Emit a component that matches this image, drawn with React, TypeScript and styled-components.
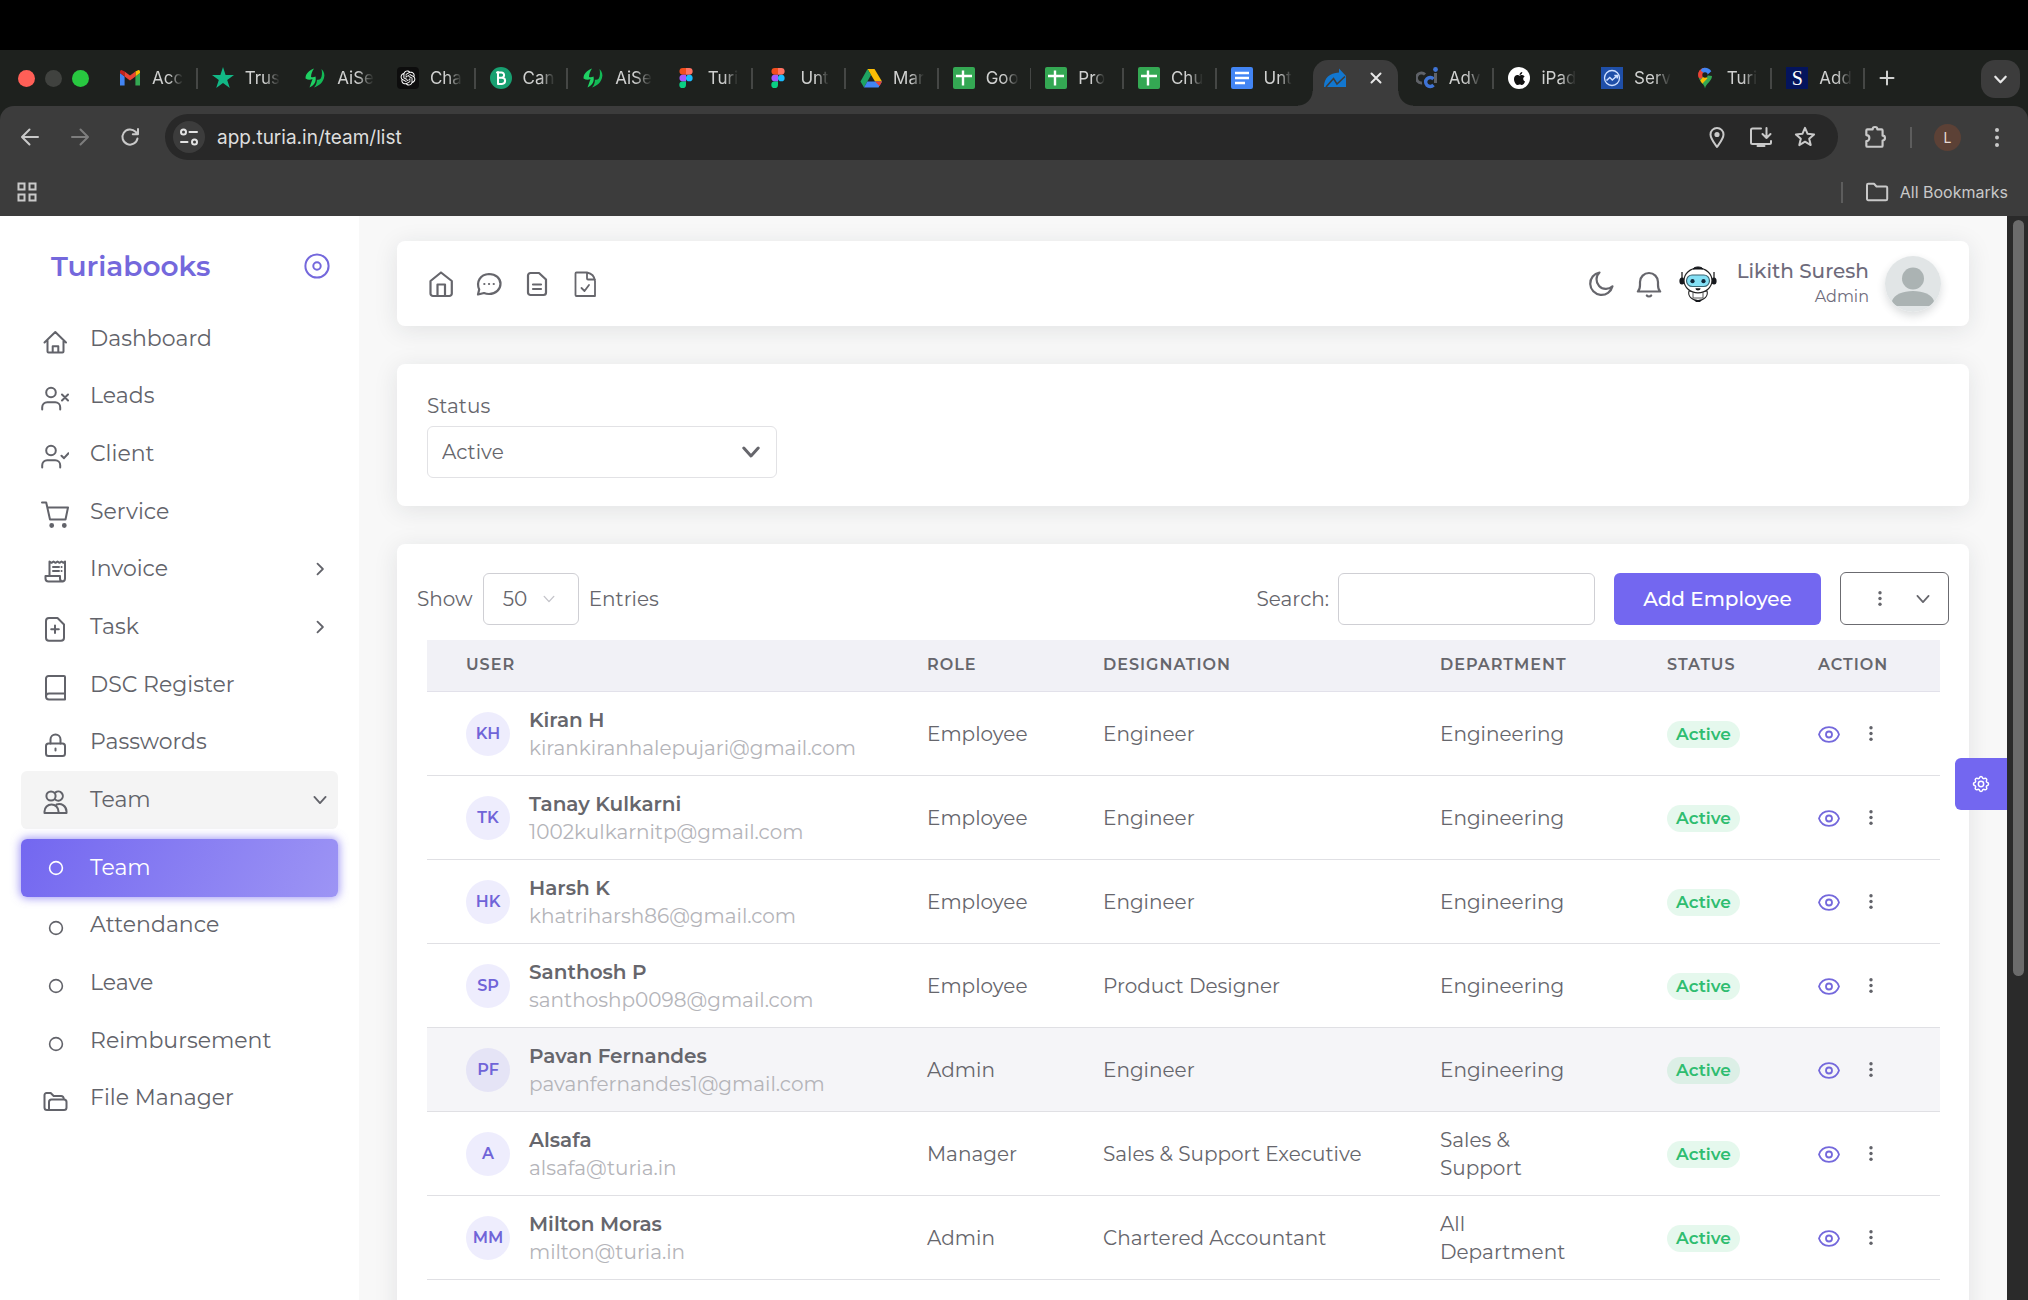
import React from 'react';
import styled, { createGlobalStyle, css } from 'styled-components';
import { RiOpenaiFill } from 'react-icons/ri';
import { FaApple } from 'react-icons/fa';

const GlobalStyle = createGlobalStyle`
  *, *::before, *::after { box-sizing: border-box; }
  html, body, #root { height: 100%; margin: 0; }
  body { overflow: hidden; background: #000; }
  button, input, select { font: inherit; color: inherit; margin: 0; }
  button { cursor: pointer; }
`;

const ui = "Inter, Roboto, 'Liberation Sans', sans-serif";
const brand = "Montserrat, Inter, 'Open Sans', sans-serif";
const purple = '#7367f0';

/* ---------- Browser chrome ---------- */

const Screen = styled.div`
  display: flex;
  flex-direction: column;
  height: 100vh;
  padding-top: 50px;
  background: #000;
  font-family: ${ui};
`;

const TabStrip = styled.header`
  display: flex;
  height: 56px;
  flex: none;
  padding: 10px 8px 0 18px;
  background: #1e211e;
  color: #d0d1d0;
`;

const Lights = styled.div`
  display: flex;
  align-items: center;
  gap: 10px;
  width: 87px;
  padding-bottom: 10px;
`;

const Light = styled.span<{ $color: string }>`
  width: 17px;
  height: 17px;
  border-radius: 50%;
  background: ${(p) => p.$color};
`;

const Tabs = styled.div`
  display: grid;
  grid-auto-flow: column;
  grid-auto-columns: minmax(0, 1fr);
  flex: 1;
`;

const TabItem = styled.div`
  display: flex;
  align-items: center;
  height: 36px;
  gap: 11px;
  padding-left: 14px;
`;

const TabTitle = styled.span`
  white-space: nowrap;
  font-size: 17px;
  line-height: 24px;
  mask-image: linear-gradient(90deg, #000 55%, transparent 100%);
`;

const TabLine = styled.span`
  width: 2px;
  height: 21px;
  margin-left: auto;
  background: #454745;
`;

const ActiveTab = styled.div`
  position: relative;
  display: flex;
  align-items: center;
  justify-content: space-between;
  margin: 0 4px;
  padding: 0 16px 10px 11px;
  border-radius: 15px 15px 0 0;
  background: #3c3c3c;
  &::before,
  &::after {
    content: '';
    position: absolute;
    bottom: 0;
    width: 15px;
    height: 15px;
  }
  &::before {
    right: 100%;
    background: radial-gradient(circle at 0 0, transparent 14px, #3c3c3c 15px);
  }
  &::after {
    left: 100%;
    background: radial-gradient(circle at 100% 0, transparent 14px, #3c3c3c 15px);
  }
`;

const PlainButton = styled.button`
  display: inline-flex;
  align-items: center;
  justify-content: center;
  flex: none;
  padding: 0;
  border: 0;
  background: none;
`;

const NewTab = styled(PlainButton)`
  width: 44px;
  height: 36px;
`;

const TabMenu = styled(PlainButton)`
  width: 39px;
  height: 38px;
  margin-left: 72px;
  border-radius: 14px;
  background: #3c3c3c;
`;

const Toolbar = styled.div`
  display: flex;
  align-items: center;
  flex: none;
  height: 62px;
  padding: 0 17px 0 18px;
  background: #3c3c3c;
  color: #c9c9c9;
  border-radius: 14px 14px 0 0;
`;

const ToolbarBack = styled.div`
  flex: none;
  background: #1e211e;
`;

const NavButtons = styled.div`
  display: flex;
  gap: 26px;
  width: 147px;
`;

const UrlBar = styled.div`
  display: flex;
  align-items: center;
  flex: 1;
  height: 46px;
  padding: 0 21px 0 8px;
  border-radius: 23px;
  background: #282828;
`;

const SiteInfo = styled(PlainButton)`
  width: 32px;
  height: 32px;
  border-radius: 50%;
  background: #3c3c3c;
`;

const UrlInput = styled.input`
  flex: 1;
  min-width: 0;
  margin-left: 12px;
  padding: 0;
  border: 0;
  outline: 0;
  background: none;
  color: #dedede;
  font-size: 19px;
`;

const UrlActions = styled.div`
  display: flex;
  gap: 20px;
`;

const ToolbarEnd = styled.div`
  display: flex;
  align-items: center;
  gap: 22px;
  padding-left: 24px;
`;

const MenuButton = styled(PlainButton)`
  width: 28px;
  height: 28px;
`;

const Divider = styled.span`
  width: 2px;
  height: 21px;
  background: #5d5d5d;
`;

const Profile = styled(PlainButton)`
  width: 27px;
  height: 27px;
  border-radius: 50%;
  background: #5c4136;
  color: #e6d9d3;
  font-size: 14px;
`;

const Bookmarks = styled.div`
  display: flex;
  align-items: center;
  justify-content: space-between;
  flex: none;
  height: 48px;
  padding: 0 20px 0 16px;
  background: #3c3c3c;
  color: #c9c9c9;
  font-size: 16px;
`;

const AllBookmarks = styled(PlainButton)`
  gap: 11px;
  &::before {
    content: '';
    width: 2px;
    height: 21px;
    margin-right: 11px;
    background: #5d5d5d;
  }
`;

/* ---------- Page shell ---------- */

const Page = styled.div`
  display: flex;
  flex: 1;
  min-height: 0;
  background: #f8f8f8;
  color: #66666c;
  font-family: ${brand};
  font-size: 20px;
  line-height: 28px;
`;

const Scrollbar = styled.div`
  flex: none;
  width: 21px;
  padding: 4px 4px 0 6px;
  background: #2a2a2a;
`;

const Thumb = styled.div`
  height: 70%;
  border-radius: 6px;
  background: #6b6b6b;
`;

const Sidebar = styled.aside`
  flex: none;
  width: 359px;
  padding: 0 21px;
  background: #fff;
`;

const BrandRow = styled.div`
  display: flex;
  align-items: center;
  justify-content: space-between;
  height: 94px;
  padding: 5px 7px 0 30px;
  color: #7468dc;
`;

const BrandName = styled.a`
  color: inherit;
  font-size: 28px;
  font-weight: 600;
  text-decoration: none;
`;

const NavList = styled.ul<{ $height: number }>`
  display: grid;
  grid-auto-rows: 1fr;
  height: ${(p) => p.$height}px;
  margin: 0 0 10px;
  padding: 0;
  list-style: none;
`;

const NavLink = styled.a<{ $open?: boolean; $active?: boolean }>`
  display: flex;
  align-items: center;
  height: 100%;
  padding: 0 11px 0 20px;
  border-radius: 6px;
  color: #62636a;
  font-size: 22px;
  text-decoration: none;
  ${(p) => p.$open && css`background: #f4f4f4;`}
  ${(p) =>
    p.$active &&
    css`
      background: linear-gradient(118deg, ${purple}, rgba(115, 103, 240, 0.7));
      box-shadow: 0 0 10px 1px rgba(115, 103, 240, 0.7);
      color: #fff;
    `}
`;

const NavIcon = styled.span<{ $ring?: boolean }>`
  display: flex;
  width: 28px;
  margin-right: 21px;
  padding-top: ${(p) => (p.$ring ? 0 : 6)}px;
`;

const NavText = styled.span`
  flex: 1;
`;

const Main = styled.main`
  position: relative;
  flex: 1;
  min-width: 0;
  padding: 25px 38px 0 38px;
  overflow: hidden;
`;

const Card = styled.section`
  border-radius: 8px;
  background: #fff;
  box-shadow: 0 4px 24px rgba(34, 41, 47, 0.1);
`;

const Navbar = styled(Card)`
  display: flex;
  align-items: center;
  justify-content: space-between;
  height: 85px;
  margin-bottom: 38px;
  padding: 0 28px 0 30px;
`;

const IconGroup = styled.div`
  display: flex;
  align-items: center;
  gap: 20px;
`;

const UserBlock = styled.div`
  display: flex;
  align-items: center;
  gap: 16px;
`;

const UserText = styled.div`
  display: flex;
  flex-direction: column;
  padding-left: 4px;
  text-align: right;
  line-height: 25px;
  color: #6e6b7b;
`;

const UserName = styled.span`
  font-weight: 500;
`;

const UserRole = styled.span`
  font-size: 16px;
`;

const UserPic = styled.span`
  display: flex;
  width: 56px;
  height: 56px;
  border-radius: 50%;
  overflow: hidden;
  box-shadow: 0 4px 8px rgba(34, 41, 47, 0.16);
`;

const FilterCard = styled(Card)`
  height: 142px;
  margin-bottom: 38px;
  padding: 28px 30px;
`;

const FieldLabel = styled.label`
  display: block;
  margin-bottom: 6px;
`;

const SelectWrap = styled.div<{ $width: number }>`
  position: relative;
  width: ${(p) => p.$width}px;
`;

const Select = styled.select<{ $pad: number; $border: string }>`
  width: 100%;
  height: 52px;
  padding: 0 ${(p) => p.$pad}px;
  border: 1px solid ${(p) => p.$border};
  border-radius: 6px;
  appearance: none;
  background: #fff;
`;

const SelectArrow = styled.span<{ $right: number }>`
  position: absolute;
  top: 0;
  right: ${(p) => p.$right}px;
  display: flex;
  align-items: center;
  height: 100%;
  pointer-events: none;
`;

const TableCard = styled(Card)`
  height: 1200px;
  padding: 28px 29px 0 30px;
`;

const Controls = styled.div`
  display: flex;
  align-items: center;
  justify-content: space-between;
  margin: 0 -9px 15px -10px;
`;

const ControlGroup = styled.div<{ $gap: number }>`
  display: flex;
  align-items: center;
  gap: ${(p) => p.$gap}px;
`;

const SearchLabel = styled.label`
  display: flex;
  align-items: center;
  gap: 9px;
`;

const SearchInput = styled.input`
  width: 257px;
  height: 52px;
  padding: 0 16px;
  border: 1px solid #cfcfd4;
  border-radius: 6px;
  background: #fff;
`;

const AddButton = styled.button`
  width: 207px;
  height: 52px;
  padding: 0;
  border: 0;
  border-radius: 6px;
  background: ${purple};
  color: #fff;
  font-weight: 500;
`;

const MoreButton = styled.button`
  display: flex;
  align-items: center;
  justify-content: flex-end;
  gap: 33px;
  width: 109px;
  height: 53px;
  padding: 0 18px;
  border: 1px solid #6b6b70;
  border-radius: 6px;
  background: #fff;
`;

const Table = styled.table`
  width: 100%;
  border-collapse: separate;
  border-spacing: 0;
  table-layout: fixed;
`;

const Col = styled.col<{ $width?: number }>`
  width: ${(p) => (p.$width ? `${p.$width}px` : 'auto')};
`;

const Th = styled.th<{ $first?: boolean }>`
  height: 52px;
  padding: 0 0 2px ${(p) => (p.$first ? 39 : 26)}px;
  border-bottom: 1px solid #e2e1ea;
  background: #f1f1f6;
  font-size: 16px;
  font-weight: 600;
  letter-spacing: 1px;
  text-align: left;
`;

const Td = styled.td<{ $first?: boolean; $narrow?: boolean }>`
  height: 84px;
  padding: 0 ${(p) => (p.$narrow ? 64 : 0)}px 0 ${(p) => (p.$first ? 39 : 26)}px;
  border-bottom: 1px solid #e0e0e4;
`;

const Row = styled.tr<{ $hover?: boolean }>`
  background: ${(p) => (p.$hover ? '#f5f5f8' : 'transparent')};
`;

const Person = styled.div`
  display: flex;
  align-items: center;
  gap: 19px;
`;

const Initials = styled.span`
  display: flex;
  align-items: center;
  justify-content: center;
  width: 44px;
  height: 44px;
  border-radius: 50%;
  background: rgba(115, 103, 240, 0.12);
  color: #7064d8;
  font-size: 16px;
  font-weight: 600;
`;

const PersonText = styled.div`
  display: flex;
  flex-direction: column;
`;

const PersonName = styled.span`
  font-weight: 600;
`;

const PersonMail = styled.span`
  color: #b4b4b9;
`;

const Badge = styled.span`
  display: inline-block;
  padding: 0 9px;
  border-radius: 14px;
  background: rgba(40, 199, 111, 0.12);
  color: #2fbd70;
  font-size: 17px;
  font-weight: 600;
  line-height: 27px;
`;

const Actions = styled.div`
  display: flex;
  align-items: center;
  gap: 28px;
  color: #62636a;
`;

const Customizer = styled.button`
  position: absolute;
  top: 542px;
  right: 0;
  display: flex;
  align-items: center;
  justify-content: center;
  width: 52px;
  height: 52px;
  padding: 0;
  border: 0;
  border-radius: 6px 0 0 6px;
  background: ${purple};
  color: #fff;
`;

/* ---------- Drawings ---------- */

type IconProps = { size?: number; box?: number; w?: number; color?: string; children?: React.ReactNode };

const Line = ({ size = 28, box = 28, w = 2, color = 'currentColor', children }: IconProps) => (
  <svg
    width={size}
    height={size}
    viewBox={`0 0 ${box} ${box}`}
    fill="none"
    stroke={color}
    strokeWidth={w}
    strokeLinecap="round"
    strokeLinejoin="round"
    aria-hidden="true"
  >
    {children}
  </svg>
);

const FavSvg = styled.svg`
  flex: none;
`;

const Fav = ({ children }: { children: React.ReactNode }) => (
  <FavSvg width="22" height="22" viewBox="0 0 22 22" aria-hidden="true">
    {children}
  </FavSvg>
);

const Dots = ({ h = 16, r = 2 }: { h?: number; r?: number }) => (
  <svg width="6" height={h} viewBox={`0 0 6 ${h}`} fill="currentColor" aria-hidden="true">
    <circle cx="3" cy={r} r={r} />
    <circle cx="3" cy={h / 2} r={r} />
    <circle cx="3" cy={h - r} r={r} />
  </svg>
);

const Down = ({ size = 12, w = 2, color = 'currentColor' }: IconProps) => (
  <Line size={size} box={12} w={w} color={color}>
    <path d="M1.2 3.4 6 8.6l4.8-5.2" />
  </Line>
);

const Right = () => (
  <Line size={14} box={14} w={1.8}>
    <path d="m4.5 1.6 5.4 5.4-5.4 5.4" />
  </Line>
);

const Ring = () => (
  <Line w={1.6}>
    <circle cx="15" cy="14" r="6.4" />
  </Line>
);

const GmailFav = () => (
  <Fav>
    <path d="M1 18.5V6l4.6 3.4v9.1z" fill="#4285f4" />
    <path d="M16.4 18.5V9.4L21 6v12.5z" fill="#34a853" />
    <path d="M16.4 4.6 19 3.2c1.2-.5 2 .5 2 1.6V6l-4.6 3.5z" fill="#fbbc04" />
    <path d="M1 6V4.800c0-1.100.9-2.100 2-1.600l2.600 1.400v4.900z" fill="#c5221f" />
    <path d="M5.600 4.600 11 8.600l5.400-4v4.900L11 13.500 5.600 9.500z" fill="#ea4335" />
  </Fav>
);
const StarFav = () => (
  <Fav>
    <path d="M11 0l2.600 8H22l-6.800 4.900L17.800 21 11 16 4.200 21l2.600-8.100L0 8h8.400z" fill="#12b886" />
  </Fav>
);
const AiFav = () => (
  <Fav>
    <path d="M10 1.500C5 3.500 1.500 6.500 1.500 11.500c2.500 1.500 5 1.500 7 .5L5.500 20.500c5-2 7-6 6-10.900-1.500.8-3 1-4.500.4C7.200 6.600 8.200 4 10 1.500z" fill="#1fd163" />
    <path d="M17.500 2c2.600 2.500 3.500 5.500 2.500 9-1.300 4.500-4.500 7.600-10 9.500 2.200-2.500 3-5 2.900-7.800 1.600.4 2.800 0 3.700-1 1.600-2.400 1.700-6 .9-9.700z" fill="#13b956" />
  </Fav>
);
const GptBox = styled.span`
  display: flex;
  align-items: center;
  justify-content: center;
  flex: none;
  width: 22px;
  height: 22px;
  border-radius: 4px;
  background: #0d0d0d;
  color: #fff;
`;
const AppleBox = styled(GptBox)`
  border-radius: 50%;
  background: #fff;
  color: #111;
`;
const BFav = () => (
  <Fav>
    <circle cx="11" cy="11" r="11" fill="#18a071" />
    <path d="M8 5v12M7 5.500h4.500a2.600 2.600 0 0 1 0 5.200H9m3 0a3.100 3.100 0 0 1 0 6.200H8" fill="none" stroke="#fff" strokeWidth="2" strokeLinecap="round" />
  </Fav>
);
const FigmaFav = () => (
  <Fav>
    <path d="M7.800 1H11v6.700H7.800a3.350 3.350 0 0 1 0-6.700z" fill="#f24e1e" />
    <path d="M11 1h3.300a3.350 3.350 0 0 1 0 6.700H11z" fill="#ff7262" />
    <path d="M7.800 7.700H11v6.700H7.800a3.350 3.350 0 0 1 0-6.700z" fill="#a259ff" />
    <circle cx="14.300" cy="11" r="3.350" fill="#1abcfe" />
    <path d="M7.800 14.400H11v3.300a3.350 3.350 0 1 1-3.200-3.300z" fill="#0acf83" />
  </Fav>
);
const DriveFav = () => (
  <Fav>
    <path d="M7.500 2h7L22 14.500h-7z" fill="#fbbc04" />
    <path d="M7.500 2 11 8 4 20.500.5 14.500z" fill="#1ea362" />
    <path d="M7.300 14.500H22L18.500 20.500H4z" fill="#4285f4" />
    <path d="M15 14.500h7l-2.500 4.500z" fill="#ea4335" />
  </Fav>
);
const SheetFav = () => (
  <Fav>
    <rect width="22" height="22" rx="2" fill="#34a853" />
    <path d="M3 9h16M10 3.500v15" stroke="#fff" strokeWidth="2.400" />
  </Fav>
);
const DocFav = () => (
  <Fav>
    <rect width="22" height="22" rx="2" fill="#4285f4" />
    <path d="M4 6h14M4 11h14M4 16h10" stroke="#fff" strokeWidth="2.400" />
  </Fav>
);
const TuriaFav = () => (
  <Fav>
    <path d="M0 20C0 11 5.500 6 15 5.500V1.500L22 9V20z" fill="#1277d0" />
    <path d="M2 20 9.500 11.500l3.500 5.500L21 9.500" fill="none" stroke="#3c3c3c" strokeWidth="1.600" />
  </Fav>
);
const CjFav = () => (
  <Fav>
    <path d="M9 7.500a5 5 0 1 0-3 8.500" fill="none" stroke="#5f6268" strokeWidth="3" />
    <path d="M17.500 12a4.500 4.500 0 1 0 0 6" fill="none" stroke="#3f74d6" strokeWidth="3.400" />
    <path d="M19.500 6v10" stroke="#5f6268" strokeWidth="3" />
    <circle cx="19.500" cy="2.500" r="2.400" fill="#3f74d6" />
  </Fav>
);
const SerFav = () => (
  <Fav>
    <rect width="22" height="22" fill="#1f4fa8" />
    <circle cx="11" cy="11" r="7.500" fill="none" stroke="#cfe0ff" strokeWidth="1.300" />
    <path d="m5.500 13.500 3.300-3 2.500 2.500 5-4.500m-3 0h3v3" fill="none" stroke="#cfe0ff" strokeWidth="1.500" />
  </Fav>
);
const MapFav = () => (
  <Fav>
    <path d="M11 21.500C10.400 17 6 15 4.800 10.800L11 8l7 1C17.800 14.500 11.800 16.500 11 21.500z" fill="#34a853" />
    <path d="M4.800 10.800C2.800 5.500 6.500.8 11 .8L7.500 9z" fill="#ea4335" />
    <path d="M8 1.500c3.500-1.500 7.500-.3 9.300 2.700L12 9 6.500 4z" fill="#4285f4" />
    <path d="M6.300 13.800 10 8.500l3.500 2.700-5.200 5.500z" fill="#fbbc04" />
    <path d="M6 3 11 7 7 12 4.800 10.800C3.800 8 4.200 5 6 3z" fill="#ea4335" />
    <circle cx="11" cy="8" r="2.700" fill="#1e211e" />
  </Fav>
);
const SBox = styled(GptBox)`
  border-radius: 0;
  background: #04145c;
  font: 20px/22px 'Liberation Serif', serif;
`;

const HomeIcon = () => (
  <Line>
    <path d="M3.500 14.500 14.300 4 25 14.500M6.500 12v11.500a1 1 0 0 0 1 1h14a1 1 0 0 0 1-1V12M11.700 24.500v-6.300h5.600v6.300" />
  </Line>
);
const LeadIcon = () => (
  <Line>
    <circle cx="10" cy="7.500" r="4.800" />
    <path d="M1.200 24.500v-2.300a5 5 0 0 1 5-5h8a5 5 0 0 1 5 5v2.300M21 9.500l6 6M27 9.500l-6 6" />
  </Line>
);
const ClientIcon = () => (
  <Line>
    <circle cx="10" cy="7.500" r="4.800" />
    <path d="M1.200 24.500v-2.300a5 5 0 0 1 5-5h8a5 5 0 0 1 5 5v2.300M20.500 12.700l2.500 2.500 4.500-5" />
  </Line>
);
const CartIcon = () => (
  <Line>
    <path d="M1 1.500h4.200l3.800 17h15.500L27 6.500H6.500" />
    <circle cx="10.700" cy="24.500" r="1.400" fill="currentColor" />
    <circle cx="23.300" cy="24.500" r="1.400" fill="currentColor" />
  </Line>
);
const InvoiceIcon = () => (
  <Line>
    <path d="M8.500 18V3.500l2 1.300 2-1.300 2 1.300 2-1.300 2 1.300 2-1.300 2 1.300 1.500-1.300v17a3 3 0 0 1-3 3h-13.500a3 3 0 0 1-3-3V18h14.500v2.500a3 3 0 0 0 3 3M12 9h6M12 13h6M20.500 9h.1M20.500 13h.1" />
  </Line>
);
const TaskIcon = () => (
  <Line>
    <path d="M8 2h8.500L23 8.500v13.200a3 3 0 0 1-3 3H8a3 3 0 0 1-3-3V5a3 3 0 0 1 3-3zM14 9.500v7.500M10.200 13.200h7.600" />
  </Line>
);
const BookIcon = () => (
  <Line>
    <path d="M24 19.500V3a1 1 0 0 0-1-1H7.500A2.500 2.500 0 0 0 5 4.500v18.500M24 19.500H8A3 3 0 0 0 5 22.500 3 3 0 0 0 8 25.500h16M24 19.500v6" />
  </Line>
);
const LockIcon = () => (
  <Line>
    <rect x="5" y="12.500" width="19" height="12.500" rx="2.500" />
    <path d="M9.500 12.500V8.500a5 5 0 0 1 10 0v4M14.500 17.500v2" />
  </Line>
);
const TeamIcon = () => (
  <Line>
    <circle cx="10" cy="7" r="4.600" />
    <path d="M14.500 3.400a4.600 4.600 0 1 1 0 7.400M3.500 24v-1.500a7 7 0 0 1 14 0V24zM15.500 15.500c5-1.500 10 1.500 10 7V24h-8" />
  </Line>
);
const FolderIcon = () => (
  <Line>
    <path d="M8 23H6a2.500 2.500 0 0 1-2.500-2.500V8A2 2 0 0 1 5.500 6h4.200l3 3h7.500a2.500 2.500 0 0 1 2.500 2.500v.5" />
    <path d="M8 23V15a2.500 2.500 0 0 1 2.500-2.500H23a2.500 2.500 0 0 1 2.500 2.500v5.500A2.500 2.500 0 0 1 23 23z" />
  </Line>
);

const Robot = () => (
  <svg width="38" height="36" viewBox="0 0 38 36" aria-hidden="true">
    <path d="M3 6v8M35 6v8" stroke="#222" strokeWidth="1.300" />
    <ellipse cx="3" cy="15" rx="2.600" ry="3.500" fill="#16181d" />
    <ellipse cx="35" cy="15" rx="2.600" ry="3.500" fill="#16181d" />
    <path d="M10 25h18c1.500 5-3 9.500-9 9.500S8.500 30 10 25z" fill="#fff" stroke="#222" strokeWidth="1.100" />
    <path d="M14 26.500v5.500h10v-5.500" fill="#fff" stroke="#555" strokeWidth="1" />
    <ellipse cx="19" cy="14.500" rx="14" ry="12.300" fill="#fff" stroke="#222" strokeWidth="1.200" />
    <path d="M14 3C15.500.3 22.500.3 24 3z" fill="#16181d" stroke="#16181d" />
    <rect x="7.500" y="9" width="23" height="11.500" rx="5.700" fill="#84e0f5" stroke="#3a6472" strokeWidth="1.200" />
    <circle cx="13.500" cy="15.200" r="2.100" fill="#10283c" />
    <circle cx="24.500" cy="15.200" r="2.100" fill="#10283c" />
    <path d="M16.500 22.300h5c0 3-5 3-5 0zM15 34h8l-2 2h-4z" fill="#16181d" />
  </svg>
);

const Eye = () => (
  <Line size={22} box={22} w={1.8} color="#7468dc">
    <path d="M1 11.500c1.500-4.500 5.300-7.300 10-7.300s8.500 2.800 10 7.300c-1.500 4.500-5.300 7.300-10 7.300S2.500 16 1 11.500z" />
    <circle cx="11" cy="11.500" r="3" />
  </Line>
);

/* ---------- Data ---------- */

const tabsBefore: [React.ReactNode, string][] = [
  [<GmailFav />, 'Acc'],
  [<StarFav />, 'Trus'],
  [<AiFav />, 'AiSe'],
  [<GptBox><RiOpenaiFill size={18} /></GptBox>, 'Cha'],
  [<BFav />, 'Can'],
  [<AiFav />, 'AiSe'],
  [<FigmaFav />, 'Turi'],
  [<FigmaFav />, 'Unt'],
  [<DriveFav />, 'Mar'],
  [<SheetFav />, 'Goo'],
  [<SheetFav />, 'Pro'],
  [<SheetFav />, 'Chu'],
  [<DocFav />, 'Unt'],
];

const tabsAfter: [React.ReactNode, string][] = [
  [<CjFav />, 'Adv'],
  [<AppleBox><FaApple size={15} /></AppleBox>, 'iPad'],
  [<SerFav />, 'Serv'],
  [<MapFav />, 'Turi'],
  [<SBox>S</SBox>, 'Add'],
];

type NavEntry = { label: string; icon: React.ReactNode; arrow?: 'right' | 'down'; active?: boolean };

const mainNav: NavEntry[] = [
  { label: 'Dashboard', icon: <HomeIcon /> },
  { label: 'Leads', icon: <LeadIcon /> },
  { label: 'Client', icon: <ClientIcon /> },
  { label: 'Service', icon: <CartIcon /> },
  { label: 'Invoice', icon: <InvoiceIcon />, arrow: 'right' },
  { label: 'Task', icon: <TaskIcon />, arrow: 'right' },
  { label: 'DSC Register', icon: <BookIcon /> },
  { label: 'Passwords', icon: <LockIcon /> },
  { label: 'Team', icon: <TeamIcon />, arrow: 'down' },
];

const subNav: NavEntry[] = [
  { label: 'Team', icon: <Ring />, active: true },
  { label: 'Attendance', icon: <Ring /> },
  { label: 'Leave', icon: <Ring /> },
  { label: 'Reimbursement', icon: <Ring /> },
  { label: 'File Manager', icon: <FolderIcon /> },
];

const people = [
  ['KH', 'Kiran H', 'kirankiranhalepujari@gmail.com', 'Employee', 'Engineer', 'Engineering'],
  ['TK', 'Tanay Kulkarni', '1002kulkarnitp@gmail.com', 'Employee', 'Engineer', 'Engineering'],
  ['HK', 'Harsh K', 'khatriharsh86@gmail.com', 'Employee', 'Engineer', 'Engineering'],
  ['SP', 'Santhosh P', 'santhoshp0098@gmail.com', 'Employee', 'Product Designer', 'Engineering'],
  ['PF', 'Pavan Fernandes', 'pavanfernandes1@gmail.com', 'Admin', 'Engineer', 'Engineering'],
  ['A', 'Alsafa', 'alsafa@turia.in', 'Manager', 'Sales & Support Executive', 'Sales & Support'],
  ['MM', 'Milton Moras', 'milton@turia.in', 'Admin', 'Chartered Accountant', 'All Department'],
  ['A', 'Akshay', 'akshay@turia.in', 'Employee', 'Engineer', 'Engineering'],
];

const Tab = ({ icon, title, line }: { icon: React.ReactNode; title: string; line: boolean }) => (
  <TabItem>
    {icon}
    <TabTitle>{title}</TabTitle>
    {line && <TabLine />}
  </TabItem>
);

const Nav = ({ items, height }: { items: NavEntry[]; height: number }) => (
  <NavList $height={height}>
    {items.map((item) => (
      <li key={item.label}>
        <NavLink href="#" $open={item.arrow === 'down'} $active={item.active}>
          <NavIcon $ring={item.active}>{item.icon}</NavIcon>
          <NavText>{item.label}</NavText>
          {item.arrow === 'right' && <Right />}
          {item.arrow === 'down' && <Down size={14} w={1.6} />}
        </NavLink>
      </li>
    ))}
  </NavList>
);

const Browser = () => (
  <>
    <TabStrip>
      <Lights>
        <Light $color="#ff5f57" />
        <Light $color="#40423f" />
        <Light $color="#28c840" />
      </Lights>
      <Tabs>
        {tabsBefore.map(([icon, title], i) => (
          <Tab key={i} icon={icon} title={title} line={i < tabsBefore.length - 1} />
        ))}
        <ActiveTab>
          <TuriaFav />
          <PlainButton aria-label="Close tab">
            <Line size={12} box={12} w={2} color="#e8e8e8"><path d="m1.500 1.500 9 9m0-9-9 9" /></Line>
          </PlainButton>
        </ActiveTab>
        {tabsAfter.map(([icon, title], i) => (
          <Tab key={i} icon={icon} title={title} line />
        ))}
      </Tabs>
      <NewTab aria-label="New tab">
        <Line size={16} box={16} w={2}><path d="M8 1.500v13M1.500 8h13" /></Line>
      </NewTab>
      <TabMenu aria-label="Search tabs"><Down size={13} w={2} color="#e8e8e8" /></TabMenu>
    </TabStrip>
    <ToolbarBack>
      <Toolbar>
        <NavButtons>
          <PlainButton aria-label="Back">
            <Line size={24} box={24}><path d="M20 12H4.500m7-7.500L4 12l7.500 7.500" /></Line>
          </PlainButton>
          <PlainButton aria-label="Forward">
            <Line size={24} box={24} color="#7d7d7d"><path d="M4 12h15.500m-7-7.500L20 12l-7.500 7.500" /></Line>
          </PlainButton>
          <PlainButton aria-label="Reload">
            <Line size={24} box={24}><path d="M19.500 13.500A7.600 7.600 0 1 1 17.500 6.700L19.800 9M20 4v5.200h-5.200" /></Line>
          </PlainButton>
        </NavButtons>
        <UrlBar>
          <SiteInfo aria-label="Site information">
            <Line size={20} box={20} w={2} color="#e3e3e3">
              <circle cx="4.500" cy="5" r="2.500" /><path d="M10.500 5H18M2 15h6.500" /><circle cx="15.500" cy="15" r="2.500" />
            </Line>
          </SiteInfo>
          <UrlInput aria-label="Address" defaultValue="app.turia.in/team/list" />
          <UrlActions>
            <PlainButton aria-label="Location">
              <Line size={24} box={24}><path d="M12 22c-3.500-5-6.500-8.500-6.500-12.500a6.500 6.500 0 0 1 13 0C18.500 13.500 15.500 17 12 22z" /><circle cx="12" cy="9.500" r="1.600" fill="currentColor" /></Line>
            </PlainButton>
            <PlainButton aria-label="Install app">
              <Line size={24} box={24}><path d="M12 3.500H3.500a1.500 1.500 0 0 0-1.500 1.500v12.500A1.500 1.500 0 0 0 3.500 19h17a1.500 1.500 0 0 0 1.500-1.500V16M17.500 3v10m-4-4 4 4 4-4M8.500 21h7" /></Line>
            </PlainButton>
            <PlainButton aria-label="Bookmark this page">
              <Line size={24} box={24}><path d="m12 2.800 2.600 6 6.500.6-4.900 4.300 1.500 6.400L12 16.700l-5.700 3.400 1.500-6.400-4.900-4.300 6.500-.6z" /></Line>
            </PlainButton>
          </UrlActions>
        </UrlBar>
        <ToolbarEnd>
          <PlainButton aria-label="Extensions">
            <Line size={26} box={24}><path d="M4 6a1 1 0 0 1 1-1h4.800a2.200 2.200 0 0 1 4.400 0H18a1 1 0 0 1 1 1v4.800a2.200 2.200 0 0 1 0 4.400V20a1 1 0 0 1-1 1H5a1 1 0 0 1-1-1v-4.200a2.800 2.800 0 0 0 0-5.600z" /></Line>
          </PlainButton>
          <Divider />
          <Profile>L</Profile>
          <MenuButton aria-label="Browser menu"><Dots h={19} r={2} /></MenuButton>
        </ToolbarEnd>
      </Toolbar>
    </ToolbarBack>
    <Bookmarks>
      <PlainButton aria-label="Apps">
        <Line size={22} box={22}><path d="M2.500 2.500h6v6h-6zM13.500 2.500h6v6h-6zM2.500 13.500h6v6h-6zM13.500 13.500h6v6h-6z" strokeLinejoin="miter" /></Line>
      </PlainButton>
      <AllBookmarks>
        <Line size={24} box={24}><path d="M2 5a1.200 1.200 0 0 1 1.200-1.200H9L11.500 6.500H21A1.200 1.200 0 0 1 22.200 7.700V19A1.200 1.200 0 0 1 21 20.200H3.200A1.200 1.200 0 0 1 2 19z" /></Line>
        All Bookmarks
      </AllBookmarks>
    </Bookmarks>
  </>
);

export default function App() {
  return (
    <Screen>
      <GlobalStyle />
      <Browser />
      <Page>
        <Sidebar>
          <BrandRow>
            <BrandName href="#">Turiabooks</BrandName>
            <PlainButton aria-label="Toggle menu">
              <Line color="#7468dc"><circle cx="14" cy="14" r="11.600" /><circle cx="14" cy="14" r="3.700" /></Line>
            </PlainButton>
          </BrandRow>
          <Nav items={mainNav} height={519} />
          <Nav items={subNav} height={288} />
        </Sidebar>
        <Main>
          <Navbar>
            <IconGroup>
              <PlainButton aria-label="Home">
                <Line w={2.2}><path d="M3.500 11 14 2.500 24.800 11v12.500a2.500 2.500 0 0 1-2.500 2.500H6a2.500 2.500 0 0 1-2.500-2.500zM10.500 26V14.500h7.500V26" /></Line>
              </PlainButton>
              <PlainButton aria-label="Chat">
                <Line w={2.2}><path d="M3 24.500 4.200 19.500C1 12 5 4.500 14 4c7 0 11.500 4.500 11.500 9.800S21 24 14 24a14 14 0 0 1-5-1zM9.300 14h.1M14 14h.1M18.700 14h.1" /></Line>
              </PlainButton>
              <PlainButton aria-label="Documents">
                <Line w={2.2}><path d="M7.500 3h8.500L23 9.500v13a2.500 2.500 0 0 1-2.500 2.500h-13A2.500 2.500 0 0 1 5 22.500v-17A2.500 2.500 0 0 1 7.500 3zM10 14.500h8M10 19h8" /></Line>
              </PlainButton>
              <PlainButton aria-label="Tasks">
                <Line w={1.8}><path d="M5.500 2.500h10.500c5 1 7.500 4 8 8.500V26H5.500a1 1 0 0 1-1-1V3.500a1 1 0 0 1 1-1zM16 2.500V8.500a1 1 0 0 0 1 1h7M10.500 18l3 3 4.500-6" /></Line>
              </PlainButton>
            </IconGroup>
            <UserBlock>
              <IconGroup>
                <PlainButton aria-label="Dark mode">
                  <Line w={2.2}><path d="M12.500 2.500A11.300 11.300 0 1 0 25.500 16.300 9.200 9.200 0 0 1 12.500 2.500z" /></Line>
                </PlainButton>
                <PlainButton aria-label="Notifications">
                  <Line w={2.2}><path d="M2.800 21.500c1.800-1.500 2.200-3.500 2.200-6.500v-3a9 9 0 0 1 18 0v3c0 3 .4 5 2.200 6.500zM11.800 25.500c1 1.300 3.400 1.300 4.400 0" /></Line>
                </PlainButton>
              </IconGroup>
              <Robot />
              <UserText>
                <UserName>Likith Suresh</UserName>
                <UserRole>Admin</UserRole>
              </UserText>
              <UserPic>
                <svg width="56" height="56" viewBox="0 0 56 56" aria-hidden="true">
                  <rect width="56" height="56" fill="#e1e5e6" />
                  <circle cx="28" cy="22.500" r="11" fill="#abb3b3" />
                  <path d="M7 45c2-6.500 11-10 21-10s19 3.500 21 10c-1.500 2.500-3 4-5 5H12c-2-1-3.500-2.500-5-5z" fill="#abb3b3" />
                </svg>
              </UserPic>
            </UserBlock>
          </Navbar>

          <FilterCard>
            <FieldLabel htmlFor="status">Status</FieldLabel>
            <SelectWrap $width={350}>
              <Select id="status" $pad={14} $border="#e2e2e5" defaultValue="Active">
                <option>Active</option>
                <option>Inactive</option>
              </Select>
              <SelectArrow $right={17}><Down size={18} w={2} /></SelectArrow>
            </SelectWrap>
          </FilterCard>

          <TableCard>
            <Controls>
              <ControlGroup $gap={10}>
                <label htmlFor="entries">Show</label>
                <SelectWrap $width={96}>
                  <Select id="entries" $pad={19} $border="#cfcfd4" defaultValue="50">
                    <option>10</option>
                    <option>50</option>
                  </Select>
                  <SelectArrow $right={24}><Down w={1.4} color="#c4c4ca" /></SelectArrow>
                </SelectWrap>
                <span>Entries</span>
              </ControlGroup>
              <ControlGroup $gap={19}>
                <SearchLabel>
                  Search:
                  <SearchInput type="search" />
                </SearchLabel>
                <AddButton>Add Employee</AddButton>
                <MoreButton aria-label="More options">
                  <Dots h={15} r={1.7} />
                  <Down size={14} w={1.5} />
                </MoreButton>
              </ControlGroup>
            </Controls>
            <Table>
              <colgroup>
                <Col />
                <Col $width={176} />
                <Col $width={337} />
                <Col $width={227} />
                <Col $width={151} />
                <Col $width={148} />
              </colgroup>
              <thead>
                <tr>
                  <Th $first>USER</Th>
                  <Th>ROLE</Th>
                  <Th>DESIGNATION</Th>
                  <Th>DEPARTMENT</Th>
                  <Th>STATUS</Th>
                  <Th>ACTION</Th>
                </tr>
              </thead>
              <tbody>
                {people.map(([initials, name, mail, role, designation, department]) => (
                  <Row key={mail} $hover={initials === 'PF'}>
                    <Td $first>
                      <Person>
                        <Initials>{initials}</Initials>
                        <PersonText>
                          <PersonName>{name}</PersonName>
                          <PersonMail>{mail}</PersonMail>
                        </PersonText>
                      </Person>
                    </Td>
                    <Td>{role}</Td>
                    <Td>{designation}</Td>
                    <Td $narrow>{department}</Td>
                    <Td><Badge>Active</Badge></Td>
                    <Td>
                      <Actions>
                        <PlainButton aria-label={`View ${name}`}><Eye /></PlainButton>
                        <PlainButton aria-label={`More for ${name}`}><Dots h={15} r={1.7} /></PlainButton>
                      </Actions>
                    </Td>
                  </Row>
                ))}
              </tbody>
            </Table>
          </TableCard>
          <Customizer aria-label="Customize theme">
            <Line size={20} box={24} w={1.8}>
              <circle cx="12" cy="12" r="3.200" />
              <path d="M10.300 4.300c.4-1.800 3-1.800 3.400 0a1.700 1.700 0 0 0 2.600 1c1.500-.9 3.300.9 2.400 2.400a1.700 1.700 0 0 0 1 2.600c1.800.4 1.800 3 0 3.400a1.700 1.700 0 0 0-1 2.600c.9 1.500-.9 3.300-2.400 2.400a1.700 1.700 0 0 0-2.600 1c-.4 1.800-3 1.800-3.400 0a1.700 1.700 0 0 0-2.600-1c-1.500.9-3.300-.9-2.400-2.400a1.700 1.700 0 0 0-1-2.600c-1.800-.4-1.800-3 0-3.400a1.700 1.700 0 0 0 1-2.600c-.9-1.500.9-3.300 2.400-2.400a1.700 1.700 0 0 0 2.600-1z" />
            </Line>
          </Customizer>
        </Main>
        <Scrollbar><Thumb /></Scrollbar>
      </Page>
    </Screen>
  );
}
